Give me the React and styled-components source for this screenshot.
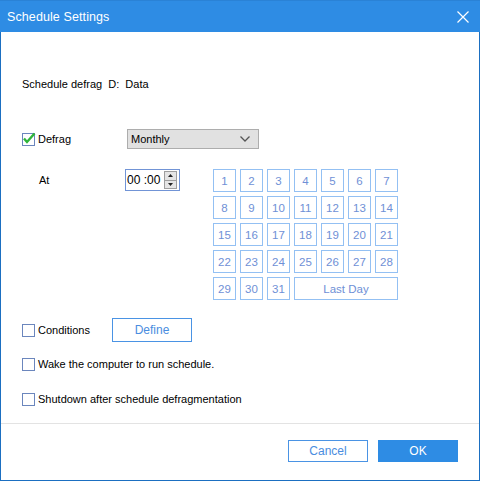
import React, { useState } from "react";
import styled, { createGlobalStyle } from "styled-components";

const GlobalStyle = createGlobalStyle`
  html, body {
    margin: 0;
    padding: 0;
    background: #ffffff;
  }
  * {
    box-sizing: border-box;
  }
`;

const days = Array.from({ length: 31 }, (_, i) => i + 1);

export default function App() {
  const [defrag, setdefrag] = useState(true);
  const [conditions, setconditions] = useState(false);
  const [wake, setwake] = useState(false);
  const [shutdown, setshutdown] = useState(false);
  const [day, setday] = useState(null);

  return (
    <>
      <GlobalStyle />
      <Window>
        <TitleBar>
          <span>Schedule Settings</span>
          <CloseBtn aria-label="close">
            <svg width="12" height="12" viewBox="0 0 12 12">
              <path d="M0.5 0.5 L11.5 11.5 M11.5 0.5 L0.5 11.5" stroke="#fff" strokeWidth="1.2" />
            </svg>
          </CloseBtn>
        </TitleBar>

        <Body>
          <Info>Schedule defrag&nbsp; D:&nbsp; Data</Info>

          <DefragRow>
            <CheckLabel $width="105px">
              <CheckBox checked={defrag} onClick={() => setdefrag(!defrag)} />
              Defrag
            </CheckLabel>
            <Select>
              <span>Monthly</span>
              <svg width="10" height="6" viewBox="0 0 10 6">
                <path d="M0.5 0.5 L5 5 L9.5 0.5" stroke="#555" strokeWidth="1.3" fill="none" />
              </svg>
            </Select>
          </DefragRow>

          <AtSection>
            <AtLabel>At</AtLabel>
            <TimeBox>
              <span>00 :00</span>
              <Spinner>
                <SpinBtn>
                  <svg width="5" height="3" viewBox="0 0 5 3">
                    <path d="M2.5 0 L5 3 L0 3 Z" fill="#222" />
                  </svg>
                </SpinBtn>
                <SpinBtn>
                  <svg width="5" height="3" viewBox="0 0 5 3">
                    <path d="M0 0 L5 0 L2.5 3 Z" fill="#222" />
                  </svg>
                </SpinBtn>
              </Spinner>
            </TimeBox>
            <DayGrid>
              {days.map((d) => (
                <DayCell key={d} $active={day === d} onClick={() => setday(d)}>
                  {d}
                </DayCell>
              ))}
              <DayCell $span={4} $active={day === "last"} onClick={() => setday("last")}>
                Last Day
              </DayCell>
            </DayGrid>
          </AtSection>

          <CondRow>
            <CheckLabel $width="90px">
              <CheckBox checked={conditions} onClick={() => setconditions(!conditions)} />
              Conditions
            </CheckLabel>
            <OutlineButton $width="80px" $height="24px">Define</OutlineButton>
          </CondRow>

          <OptionRow $top="15px">
            <CheckLabel>
              <CheckBox checked={wake} onClick={() => setwake(!wake)} />
              Wake the computer to run schedule.
            </CheckLabel>
          </OptionRow>

          <OptionRow $top="21px">
            <CheckLabel>
              <CheckBox checked={shutdown} onClick={() => setshutdown(!shutdown)} />
              Shutdown after schedule defragmentation
            </CheckLabel>
          </OptionRow>
        </Body>

        <Footer>
          <OutlineButton $width="80px" $height="22px">Cancel</OutlineButton>
          <PrimaryButton>OK</PrimaryButton>
        </Footer>
      </Window>
    </>
  );
}

function CheckBox({ checked, onClick }) {
  return (
    <Box onClick={onClick}>
      {checked && (
        <svg width="14" height="13" viewBox="0 0 14 13">
          <path d="M2 6.5 L5 10 L12.5 1.5" stroke="#2fb53a" strokeWidth="2.4" fill="none" />
        </svg>
      )}
    </Box>
  );
}

const Window = styled.div`
  width: 480px;
  height: 481px;
  border: 1px solid #1b6fc1;
  border-top: none;
  display: flex;
  flex-direction: column;
  font-family: "Liberation Sans", Arial, sans-serif;
  font-size: 11px;
  color: #000;
  background: #fff;
`;

const TitleBar = styled.div`
  height: 32px;
  background: #2e8ce4;
  border-top: 1px solid #2a82d6;
  margin: 0 -1px;
  padding: 0 10px 0 7px;
  display: flex;
  align-items: center;
  justify-content: space-between;
  color: #fff;
  font-family: "Liberation Sans", Arial, sans-serif;
  font-size: 12.5px;
  letter-spacing: 0.1px;
`;

const CloseBtn = styled.div`
  display: flex;
  align-items: center;
  justify-content: center;
  width: 14px;
  height: 14px;
`;

const Body = styled.div`
  flex: 1;
  padding: 45px 0 0 21px;
  display: flex;
  flex-direction: column;
`;

const Info = styled.div`
  line-height: 14px;
  height: 14px;
`;

const DefragRow = styled.div`
  margin-top: 38px;
  display: flex;
  align-items: center;
  height: 20px;
`;

const CheckLabel = styled.label`
  display: flex;
  align-items: center;
  gap: 3px;
  width: ${(p) => p.$width || "auto"};
  line-height: 14px;
  cursor: default;
`;

const Box = styled.span`
  width: 13px;
  height: 13px;
  border: 1px solid #6b86bd;
  background: #fff;
  position: relative;
  flex-shrink: 0;

  svg {
    position: absolute;
    left: -1px;
    top: -2px;
  }
`;

const Select = styled.div`
  width: 132px;
  height: 20px;
  background: #e1e1e1;
  border: 1px solid #adadad;
  display: flex;
  align-items: center;
  justify-content: space-between;
  padding: 0 8px 0 3px;
  color: #000;
`;

const AtSection = styled.div`
  margin-top: 20px;
  display: grid;
  grid-template-columns: 103px 88px auto;
  align-items: start;
`;

const AtLabel = styled.div`
  padding: 4px 0 0 17px;
  line-height: 14px;
`;

const TimeBox = styled.div`
  width: 55px;
  height: 22px;
  border: 1px solid #7194d6;
  display: flex;
  align-items: center;
  justify-content: space-between;
  padding: 0 2px 0 1px;
  font-size: 12px;
`;

const Spinner = styled.div`
  display: flex;
  flex-direction: column;
  width: 13px;
  height: 18px;
  border: 1px solid #9e9e9e;
  background: #e5e5e5;
`;

const SpinBtn = styled.div`
  flex: 1;
  display: flex;
  align-items: center;
  justify-content: center;

  & + & {
    border-top: 1px solid #9e9e9e;
  }
`;

const DayGrid = styled.div`
  display: grid;
  grid-template-columns: repeat(7, 23px);
  grid-auto-rows: 23px;
  gap: 4px;
`;

const DayCell = styled.div`
  grid-column: span ${(p) => p.$span || 1};
  border: 1px solid ${(p) => (p.$active ? "#2e8ce4" : "#93c0f3")};
  background: ${(p) => (p.$active ? "#e6f1fc" : "#fff")};
  color: #6f90d6;
  display: flex;
  align-items: center;
  justify-content: center;
  font-size: 11.5px;
  cursor: pointer;
`;

const CondRow = styled.div`
  margin-top: 18px;
  display: flex;
  align-items: center;
  height: 24px;
`;

const OptionRow = styled.div`
  margin-top: ${(p) => p.$top};
  display: flex;
  align-items: center;
  height: 14px;
`;

const OutlineButton = styled.div`
  width: ${(p) => p.$width};
  height: ${(p) => p.$height};
  border: 1px solid #4a93e4;
  color: #4a8de0;
  background: #fff;
  display: flex;
  align-items: center;
  justify-content: center;
  font-size: 12px;
  cursor: pointer;
`;

const PrimaryButton = styled.div`
  width: 80px;
  height: 22px;
  background: #2e8ce4;
  color: #fff;
  display: flex;
  align-items: center;
  justify-content: center;
  font-size: 12px;
  cursor: pointer;
`;

const Footer = styled.div`
  height: 57px;
  border-top: 1px solid #e3e3e3;
  padding: 16px 21px 0 0;
  display: flex;
  justify-content: flex-end;
  align-items: flex-start;
  gap: 10px;
`;
